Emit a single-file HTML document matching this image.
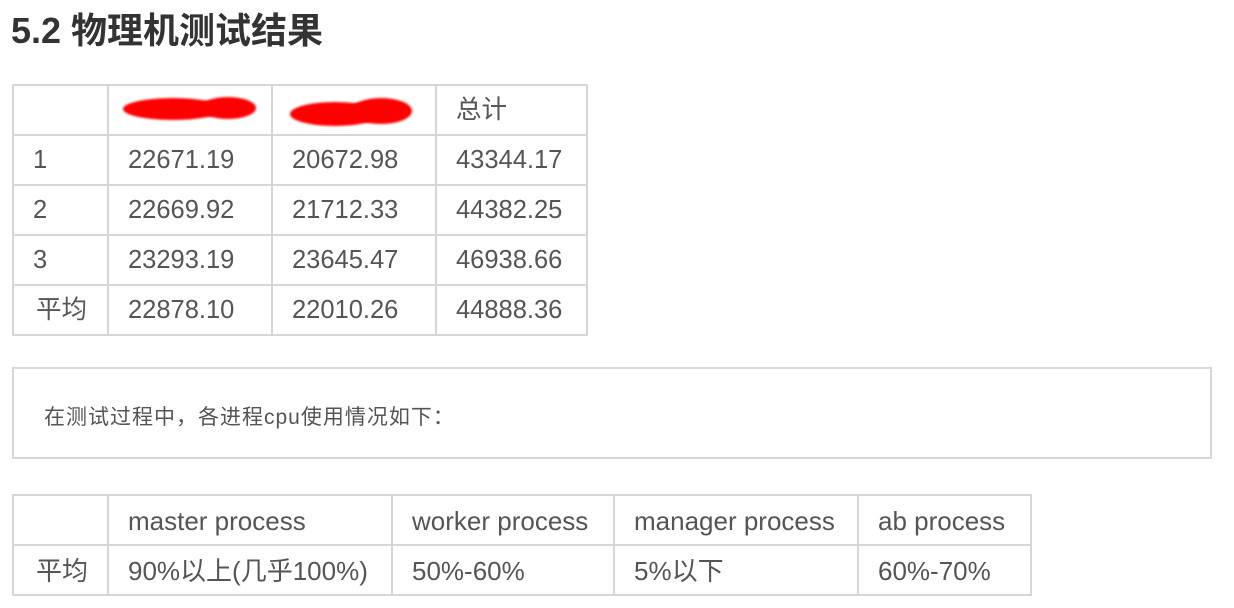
<!DOCTYPE html>
<html><head><meta charset="utf-8"><style>
body{margin:0;background:#fff;width:1234px;height:608px;overflow:hidden;position:relative;font-family:"Liberation Sans","Noto Sans CJK SC",sans-serif;color:#555;}
h1{position:absolute;left:11px;top:9px;margin:0;font-size:36px;line-height:44px;font-weight:bold;color:#333;letter-spacing:0px;}
table{position:absolute;border-collapse:collapse;table-layout:fixed;font-size:25.5px;}
td{border:2px solid #d6d6d6;padding:0 0 0 19px;height:48px;line-height:48px;white-space:nowrap;vertical-align:middle;overflow:hidden;}
td span{display:inline-block;line-height:30px;vertical-align:middle;position:relative;top:-1px;}
.box{position:absolute;left:12px;top:367px;width:1196px;height:88px;border:2px solid #d6d6d6;font-size:21px;}
.box span{position:absolute;left:30px;top:32px;letter-spacing:1px;}
.blob{position:absolute;background:#f00;border-radius:50%;filter:blur(1px);}
</style></head><body>
<h1>5.2 物理机测试结果</h1>
<table style="left:12px;top:84px;width:574px;">
<colgroup><col style="width:95px"><col style="width:164px"><col style="width:164px"><col style="width:151px"></colgroup>
<tr><td></td><td></td><td></td><td><span>总计</span></td></tr>
<tr><td><span>1</span></td><td><span>22671.19</span></td><td><span>20672.98</span></td><td><span>43344.17</span></td></tr>
<tr><td><span>2</span></td><td><span>22669.92</span></td><td><span>21712.33</span></td><td><span>44382.25</span></td></tr>
<tr><td><span>3</span></td><td><span>23293.19</span></td><td><span>23645.47</span></td><td><span>46938.66</span></td></tr>
<tr><td style="padding-left:22px"><span>平均</span></td><td><span>22878.10</span></td><td><span>22010.26</span></td><td><span>44888.36</span></td></tr>
</table>
<div class="blob" style="left:123px;top:98px;width:100px;height:22px;"></div>
<div class="blob" style="left:200px;top:97px;width:56px;height:22px;"></div>
<div class="blob" style="left:290px;top:102px;width:90px;height:24px;"></div>
<div class="blob" style="left:350px;top:98px;width:62px;height:26px;"></div>
<div class="box"><span>在测试过程中，各进程cpu使用情况如下：</span></div>
<table style="left:12px;top:494px;width:1018px;font-size:26px;">
<colgroup><col style="width:95px"><col style="width:284px"><col style="width:222px"><col style="width:244px"><col style="width:173px"></colgroup>
<tr><td></td><td><span>master process</span></td><td><span>worker process</span></td><td><span>manager process</span></td><td><span>ab process</span></td></tr>
<tr><td style="padding-left:22px"><span>平均</span></td><td><span>90%以上(几乎100%)</span></td><td><span>50%-60%</span></td><td><span>5%以下</span></td><td><span>60%-70%</span></td></tr>
</table>
</body></html>
